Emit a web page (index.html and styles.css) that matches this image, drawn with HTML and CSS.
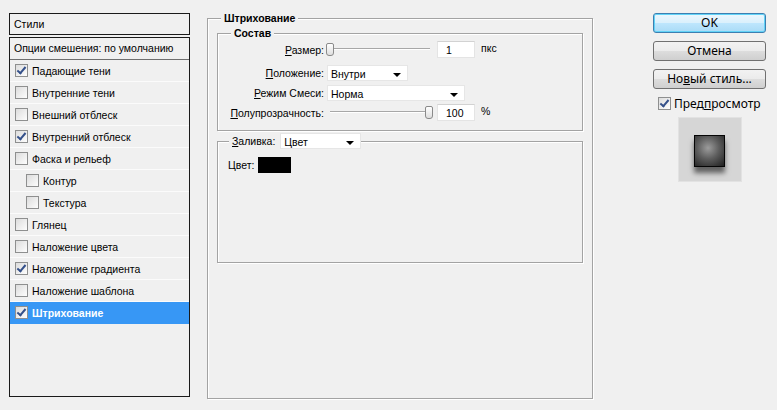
FILE: index.html
```html
<!DOCTYPE html>
<html>
<head>
    <meta charset="utf-8">
    <link rel="stylesheet" href="styles.css">
</head>
<body>
<div class="dialog">
    <div class="sidebar">
        <div class="side-head">Стили</div>
        <div class="side-list">
            <div class="side-blend">Опции смешения: по умолчанию</div>
            <div class="side-item"><span class="cb on"></span>Падающие тени</div>
            <div class="side-item"><span class="cb"></span>Внутренние тени</div>
            <div class="side-item"><span class="cb"></span>Внешний отблеск</div>
            <div class="side-item"><span class="cb on"></span>Внутренний отблеск</div>
            <div class="side-item"><span class="cb"></span>Фаска и рельеф</div>
            <div class="side-item sub"><span class="cb"></span>Контур</div>
            <div class="side-item sub"><span class="cb"></span>Текстура</div>
            <div class="side-item"><span class="cb"></span>Глянец</div>
            <div class="side-item"><span class="cb"></span>Наложение цвета</div>
            <div class="side-item"><span class="cb on"></span>Наложение градиента</div>
            <div class="side-item"><span class="cb"></span>Наложение шаблона</div>
            <div class="side-item active"><span class="cb on"></span>Штрихование</div>
        </div>
    </div>

    <div class="main">
        <fieldset class="group outer">
            <legend>Штрихование</legend>

            <fieldset class="group compose">
                <legend>Состав</legend>
                <div class="form-row row-size">
                    <span class="lbl"><u>Р</u>азмер:</span>
                    <div class="slider size-slider"><span class="thumb"></span></div>
                    <span class="num">1</span>
                    <span class="unit">пкс</span>
                </div>
                <div class="form-row row-pos">
                    <span class="lbl"><u>П</u>оложение:</span>
                    <div class="select select-short">Внутри<span class="arrow"></span></div>
                </div>
                <div class="form-row row-mode">
                    <span class="lbl"><u>Р</u>ежим Смеси:</span>
                    <div class="select select-long">Норма<span class="arrow"></span></div>
                </div>
                <div class="form-row row-opacity">
                    <span class="lbl"><u>П</u>олупрозрачность:</span>
                    <div class="slider opacity-slider"><span class="thumb"></span></div>
                    <span class="num">100</span>
                    <span class="unit">%</span>
                </div>
            </fieldset>

            <fieldset class="group fill">
                <legend>
                    <span class="fill-lbl"><u>З</u>аливка:</span>
                    <span class="select select-fill">Цвет<span class="arrow"></span></span>
                </legend>
                <div class="color-row">
                    <span>Цвет:</span>
                    <span class="swatch"></span>
                </div>
            </fieldset>
        </fieldset>
    </div>

    <div class="actions">
        <button class="btn btn-default">OK</button>
        <button class="btn">Отмена</button>
        <button class="btn">Но<u>в</u>ый стиль...</button>
        <div class="preview-check"><span class="cb on"></span><span>Пред<u>п</u>росмотр</span></div>
        <div class="preview">
            <div class="preview-square"></div>
        </div>
    </div>
</div>
</body>
</html>
```

FILE: styles.css
```css
body {
    margin: 0;
    background: #f0f0f0;
    font-family: "Liberation Sans", Arial, sans-serif;
    font-size: 10.5px;
    color: #000;
}

.dialog {
    display: flex;
    align-items: flex-start;
    height: 410px;
}

u {
    text-decoration: underline;
    text-underline-offset: 1px;
}

/* левая панель стилей */
.sidebar {
    width: 181px;
    margin: 13px 0 0 9px;
}

.side-head {
    height: 22px;
    box-sizing: border-box;
    border: 1px solid #1a1a1a;
    padding: 0 4px;
    line-height: 20px;
}

.side-list {
    margin-top: 2px;
    height: 360px;
    box-sizing: border-box;
    border: 1px solid #1a1a1a;
}

.side-blend {
    height: 22px;
    box-sizing: border-box;
    border-bottom: 1px solid #6e6e6e;
    padding-left: 4px;
    line-height: 21px;
}

.side-item {
    display: flex;
    align-items: center;
    gap: 4px;
    height: 22px;
    box-sizing: border-box;
    border-bottom: 1px solid #fbfbfb;
    padding-left: 5px;
}

.side-item.sub {
    padding-left: 16px;
}

.side-item.active {
    background: #3797f5;
    border-bottom-color: #3797f5;
    color: #fff;
    font-weight: bold;
}

.cb {
    position: relative;
    width: 11px;
    height: 11px;
    flex: none;
    border: 1px solid #8e8f8f;
    background: linear-gradient(135deg, #dcdcdc, #fdfdfd);
}

.cb.on::after {
    content: "";
    position: absolute;
    left: 3px;
    top: 0;
    width: 3px;
    height: 7px;
    border-right: 2px solid #34508a;
    border-bottom: 2px solid #34508a;
    transform: rotate(40deg);
}

/* центральная часть */
.main {
    margin: 12px 0 0 17px;
}

.group {
    margin: 0;
    padding: 0;
    border: 1px solid #a3a3a3;
    box-shadow: inset 1px 1px 0 #fff, 1px 1px 0 #fff;
}

.group legend {
    padding: 0 3px;
    background: #f0f0f0;
    font-weight: bold;
    line-height: 13px;
}

.outer {
    width: 386px;
    height: 387px;
    box-sizing: border-box;
    padding: 2px 9px 0 9px;
}

.outer > legend {
    margin-left: 4px;
}

.compose {
    padding-bottom: 9px;
}

.compose > legend {
    margin-left: 13px;
}

.form-row {
    display: flex;
    align-items: center;
    height: 17px;
}

.row-size {
    margin-top: 1px;
}

.row-pos {
    margin-top: 6px;
}

.row-mode,
.row-opacity {
    margin-top: 3px;
}

.lbl {
    width: 106px;
    text-align: right;
    flex: none;
}

.slider {
    position: relative;
    height: 13px;
}

.slider::before {
    content: "";
    position: absolute;
    left: 0;
    right: 0;
    top: 5px;
    height: 1px;
    background: #a7a7a7;
    border-bottom: 1px solid #fff;
}

.size-slider {
    width: 104px;
    margin: 0 7px 0 2px;
}

.opacity-slider {
    width: 103px;
    margin: 0 4px 0 6px;
}

.thumb {
    position: absolute;
    top: 0;
    width: 6px;
    height: 11px;
    border: 1px solid #8a8a8a;
    border-radius: 2px 2px 3px 3px;
    background: linear-gradient(#fff, #dedede);
}

.size-slider .thumb {
    left: 0;
}

.opacity-slider .thumb {
    right: 0;
}

.num {
    width: 38px;
    height: 17px;
    box-sizing: border-box;
    padding-left: 8px;
    line-height: 17px;
    background: #fff;
    border: 1px solid #e4e4e4;
    border-top-color: #d2d2d2;
}

.unit {
    margin: -4px 0 0 6px;
}

.select {
    position: relative;
    height: 16px;
    box-sizing: border-box;
    padding-left: 3px;
    line-height: 16px;
    background: #fff;
    border: 1px solid #e6e6e6;
    font-weight: normal;
}

.select-short {
    width: 81px;
    margin-left: 3px;
}

.select-long {
    width: 138px;
    margin-left: 3px;
}

.arrow {
    position: absolute;
    right: 6px;
    top: 7px;
    border-left: 4px solid transparent;
    border-right: 4px solid transparent;
    border-top: 4px solid #000;
}

.fill {
    margin-top: 2px;
    height: 130px;
    box-sizing: border-box;
}

.fill > legend {
    display: flex;
    align-items: center;
    margin-left: 11px;
    padding: 0 0 0 3px;
    font-weight: normal;
}

.fill-lbl {
    margin-right: 5px;
}

.select-fill {
    display: block;
    width: 81px;
}

.color-row {
    display: flex;
    align-items: center;
    gap: 4px;
    margin: 8px 0 0 10px;
}

.swatch {
    width: 33px;
    height: 16px;
    background: #000;
}

/* правая колонка */
.actions {
    width: 113px;
    margin: 13px 0 0 60px;
    display: flex;
    flex-direction: column;
}

.btn {
    height: 20px;
    margin: 0 0 8px 0;
    padding: 0;
    border: 1px solid #707070;
    border-radius: 3px;
    background: linear-gradient(#f2f2f2 0%, #ebebeb 50%, #dddddd 51%, #cfcfcf 100%);
    font-family: "Noto Sans", "Liberation Sans", sans-serif;
    font-size: 12px;
    line-height: 16px;
    color: #000;
}

.btn-default {
    border-color: #3c7fb1;
    background: linear-gradient(#ecf7fd 0%, #daf0fc 50%, #bee6fd 51%, #a9dbf6 100%);
    box-shadow: inset 0 0 0 1px #62d3f7;
}

.preview-check {
    display: flex;
    align-items: center;
    gap: 3px;
    margin: -2px 0 0 5px;
    font-family: "Noto Sans", "Liberation Sans", sans-serif;
    font-size: 12px;
    height: 16px;
}

.preview-check .cb {
    width: 11px;
    height: 11px;
}

.preview {
    align-self: center;
    width: 64px;
    height: 65px;
    margin-top: 6px;
    background: #d6d6d6;
    box-shadow: inset 0 0 0 1px #e2e2e2;
    display: flex;
    justify-content: center;
    padding-top: 18px;
    box-sizing: border-box;
}

.preview-square {
    width: 29px;
    height: 30px;
    border: 1px solid #050505;
    background: radial-gradient(circle at 45% 40%, #9c9c9c 0%, #5e5e5e 45%, #1e1e1e 100%);
    box-shadow: 0 6px 5px rgba(0, 0, 0, 0.55);
}
```
